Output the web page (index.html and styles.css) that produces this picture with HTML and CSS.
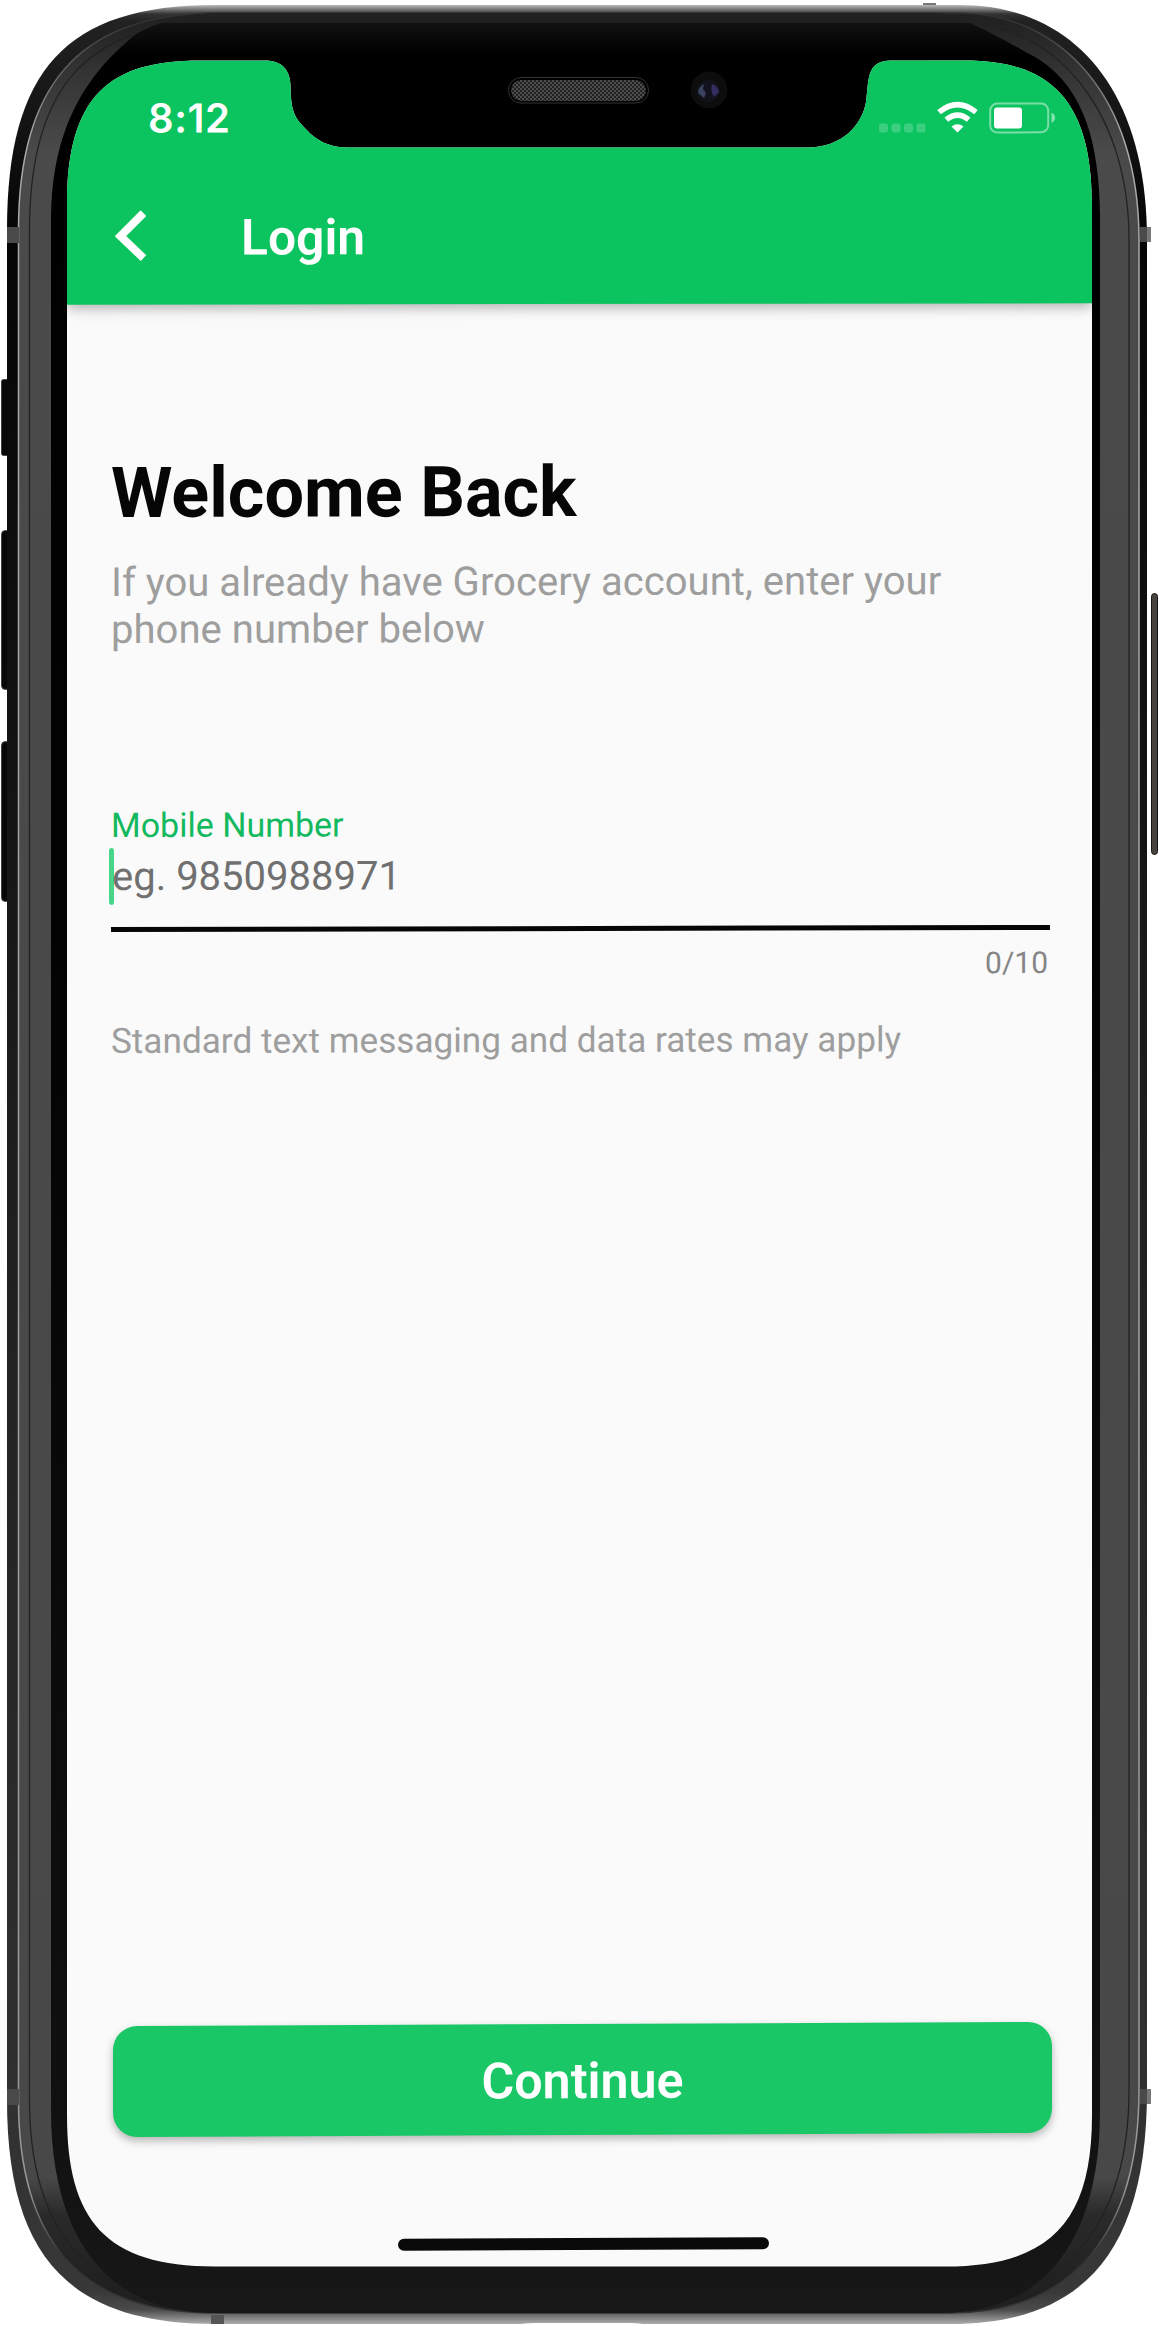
FILE: index.html
```html
<!DOCTYPE html>
<html lang="en">
<head>
<meta charset="utf-8">
<title>Login</title>
<link rel="stylesheet" href="styles.css">
</head>
<body>
<div class="phone">
  <svg class="frame" viewBox="0 0 1159 2326" aria-hidden="true">
    <defs>
      <linearGradient id="edge" x1="0" y1="0" x2="0" y2="2326" gradientUnits="userSpaceOnUse">
        <stop offset="0.0021" stop-color="#bbb"/><stop offset="0.006" stop-color="#333"/>
        <stop offset="0.009" stop-color="#222"/><stop offset="0.04" stop-color="#171717"/><stop offset="0.1" stop-color="#050505"/>
        <stop offset="0.5" stop-color="#1e1e1e"/><stop offset="0.9" stop-color="#303030"/>
        <stop offset="0.985" stop-color="#383838"/><stop offset="0.993" stop-color="#4a4a4a"/><stop offset="0.999" stop-color="#aaa"/>
      </linearGradient>
      <linearGradient id="side" x1="0" y1="0" x2="0" y2="2326" gradientUnits="userSpaceOnUse">
        <stop offset="0.01" stop-color="#222"/><stop offset="0.03" stop-color="#333"/><stop offset="0.065" stop-color="#4a4a4a"/>
        <stop offset="0.936" stop-color="#484848"/><stop offset="0.952" stop-color="#2a2a2a"/><stop offset="0.985" stop-color="#202020"/>
      </linearGradient>
      <linearGradient id="glass" x1="0" y1="0" x2="0" y2="2326" gradientUnits="userSpaceOnUse">
        <stop offset="0.006" stop-color="#222"/><stop offset="0.0098" stop-color="#202020"/><stop offset="0.0099" stop-color="#111"/>
        <stop offset="0.024" stop-color="#000"/><stop offset="0.4" stop-color="#030303"/><stop offset="0.9" stop-color="#101010"/>
        <stop offset="1" stop-color="#181818"/>
      </linearGradient>
      <linearGradient id="rim" x1="0" y1="0" x2="0" y2="2326" gradientUnits="userSpaceOnUse">
        <stop offset="0.01" stop-color="#333"/><stop offset="0.06" stop-color="#aaa"/><stop offset="0.94" stop-color="#999"/><stop offset="0.97" stop-color="#333"/>
      </linearGradient>
      <pattern id="mesh" width="4" height="4" patternUnits="userSpaceOnUse">
        <rect width="4" height="4" fill="#222"/><path d="M0 0h2v2h-2zM2 2h2v2h-2z" fill="#4b4d4f"/>
      </pattern>
    </defs>
    <g fill="#080808" stroke="#444">
      <rect x="1.500" y="379.500" width="8" height="76" rx="2"/>
      <rect x="1.500" y="530.500" width="8" height="159" rx="4"/>
      <rect x="1.500" y="741.500" width="8" height="160" rx="4"/>
    </g>
    <rect x="1151.500" y="593.500" width="6" height="261" rx="3" fill="#47443f" stroke="#161616"/>
    <path fill="#777" d="M923 3h13v9h-13zM1140 227h11v15h-11zM1140 2089h11v15h-11z"/>
    <path fill="url(#edge)" d="M7 230C7 70 66 5 215 5H960C1070 5 1147 85 1147 240V2090C1147 2250 1085 2324 950 2324H215C68 2324 7 2255 7 2100Z"/>
    <path fill="url(#side)" stroke="url(#rim)" stroke-width="1.500" d="M18.500 230C18.500 90 75 14 215 13H960C1060 14 1139 95 1139 240V2090C1139 2230 1075 2313 950 2313H215C75 2313 18.500 2235 18.500 2100Z"/>
    <path fill="none" stroke="#222" stroke-width="1.300" d="M29.500 230C29.500 90 85 23 215 22H960C1050 23 1129 105 1129 240V2090C1129 2220 1065 2305 950 2305H215C85 2305 29.500 2225 29.500 2100Z"/>
    <path fill="url(#glass)" d="M51 220C51 130 85 75 135 35C155 22 190 13 215 13H940C965 18 992 33 1040 60C1085 90 1099 145 1100 215V2110C1100 2240 1045 2313 940 2313H215C105 2313 51 2235 51 2110Z"/>
    <path fill="#4a4a4a" d="M7 227h12v16h-12zM7 2089h12v16h-12zM1140 227h7v15h-7zM1140 2089h7v15h-7z"/>
    <path fill="#555" d="M211 2315h13v9h-13z"/>
    <path fill="#fff" d="M515 2325Q525 2323 535 2323H630Q640 2323 648 2325Z"/>
    <rect x="508.500" y="77.500" width="140" height="25.500" rx="12.500" fill="#000" stroke="#333"/>
    <rect x="511" y="80" width="135" height="21" rx="10.500" fill="url(#mesh)"/>
    <circle cx="709" cy="90" r="18.500" fill="#0d0d0e"/>
    <circle cx="708.500" cy="91" r="11" fill="#12121c"/>
    <path d="M704 84Q698 87 698 93L704 98L706 93L703 89Z" fill="#3a4260"/>
    <path d="M712 84Q718 86 719 92L714 97Q710 91 712 84Z" fill="#342e60"/>
  </svg>

  <main class="screen">
    <header class="header">
      <div class="status">
        <span class="clock">8:12</span>
        <svg class="status-icons" viewBox="0 0 180 34" aria-hidden="true">
          <g fill="#fff" fill-opacity=".2"><rect x="1" y="23" width="9" height="9" rx="2.500"/><rect x="13.500" y="23" width="9" height="9" rx="2.500"/><rect x="26" y="23" width="9" height="9" rx="2.500"/><rect x="38.500" y="23" width="9" height="9" rx="2.500"/></g>
          <g fill="none" stroke="#fff"><path stroke-width="5.500" d="M61 11.700Q79.500-3.500 98 11.700"/><path stroke-width="5.500" d="M68.300 19.200Q79.500 10 90.700 19.200"/></g>
          <path fill="#fff" d="M73.500 26Q79.500 21.500 85.500 26L79.500 32Z"/>
          <rect x="112.200" y="3.200" width="58" height="28.800" rx="7" fill="none" stroke="#fff" stroke-opacity=".45" stroke-width="2"/>
          <rect x="116" y="7" width="28" height="21" rx="3" fill="#fff"/>
          <path d="M173.500 12.500q3.500 1.500 3.500 5t-3.500 5z" fill="#fff" fill-opacity=".5"/>
        </svg>
      </div>
      <div class="appbar">
        <svg class="back" viewBox="0 0 34 52" aria-hidden="true"><path d="M28.500 3.500L5.500 26.500L28.500 48.500" fill="none" stroke="#fff" stroke-width="8"/></svg>
        <span class="bar-title">Login</span>
      </div>
    </header>
    <section class="content">
      <h1 class="title">Welcome Back</h1>
      <p class="intro">If you already have Grocery account, enter your<br>phone number below</p>
      <div class="field">
        <span class="label">Mobile Number</span>
        <div class="input"><span class="caret"></span><span class="placeholder">eg. 9850988971</span></div>
        <span class="count">0/10</span>
      </div>
      <p class="note">Standard text messaging and data rates may apply</p>
    </section>
    <footer class="footer">
      <button class="continue">Continue</button>
      <div class="home"></div>
    </footer>
  </main>
</div>
</body>
</html>
```
FILE: styles.css
```css
* { box-sizing: border-box; }
body { margin: 0; background: #fff; font-family: Roboto, sans-serif; }
.phone { position: relative; width: 1159px; height: 2326px; padding: 60px 67px; overflow: hidden; }
.frame { position: absolute; inset: 0; width: 1159px; height: 2326px; }
.screen {
  position: relative;
  display: flex;
  flex-direction: column;
  width: 1025px;
  height: 2207px;
  background: #fafafa;
  clip-path: path("M0 145C0 35 43 .5 133 .5H198C215 .5 223 10 223.500 25C224 45 225 54 235 65C250 82 262 87.500 284 87.500H740C775 87.500 795 65 799 42C802 20 799 .5 824 .5H898C983 .5 1025 40 1025 145V2055C1025 2160 985 2206.500 878 2206.500H148C38 2206.500 0 2160 0 2055Z");
}
.header {
  flex: none;
  height: 243.500px;
  background: #0cc45f;
  color: #fff;
  box-shadow: 0 3px 14px rgba(0, 0, 0, .32);
  transform: skewY(-.08deg);
}
.status { display: flex; justify-content: space-between; align-items: center; height: 116px; padding: 0 34px 0 81px; }
.clock { font: 600 40px/46px Inter, sans-serif; letter-spacing: .6px; }
.status-icons { width: 180px; height: 34px; }
.appbar { display: flex; align-items: center; height: 118px; padding-left: 48px; }
.back { width: 34px; height: 52px; }
.bar-title { margin: 3px 0 0 92px; font-size: 49.800px; font-weight: 600; line-height: 60px; }
.content { flex: 1; padding: 148px 42px 0 44px; transform: skewY(-.12deg); }
.title { margin: 0; font-size: 70.200px; line-height: 80px; font-weight: 700; color: #060606; }
.intro { margin: 25.500px 0 0; font-size: 40.100px; line-height: 47px; color: #9e9e9e; }
.field { display: flex; flex-direction: column; margin-top: 152.500px; }
.label { font-size: 34px; line-height: 40px; color: #13b95e; }
.input { display: flex; height: 86.500px; border-bottom: 5px solid #060606; }
.caret { width: 5px; height: 57px; margin: 3px 0 0 -2px; border-radius: 3px; background: #47d58a; }
.placeholder { margin-left: -2px; font-size: 40px; line-height: 63px; color: #707070; }
.count { align-self: flex-end; margin: 14.500px 2px 0 0; font-size: 30px; line-height: 38px; color: #858585; }
.note { margin: 36px 0 0; font-size: 35.150px; line-height: 42px; color: #9e9e9e; }
.footer { flex: none; display: flex; flex-direction: column; align-items: center; height: 243px; transform: skewY(-.26deg); }
.continue {
  width: 939px;
  height: 111px;
  margin-left: 6px;
  border: 0;
  border-radius: 24px;
  background: #1ac767;
  color: #fff;
  font: 600 50.200px/112px Roboto, sans-serif;
  box-shadow: 0 4px 8px rgba(0, 0, 0, .28);
}
.home { width: 371px; height: 12px; margin: 102.500px 0 0 7px; border-radius: 6px; background: #0a0a0a; }
```
